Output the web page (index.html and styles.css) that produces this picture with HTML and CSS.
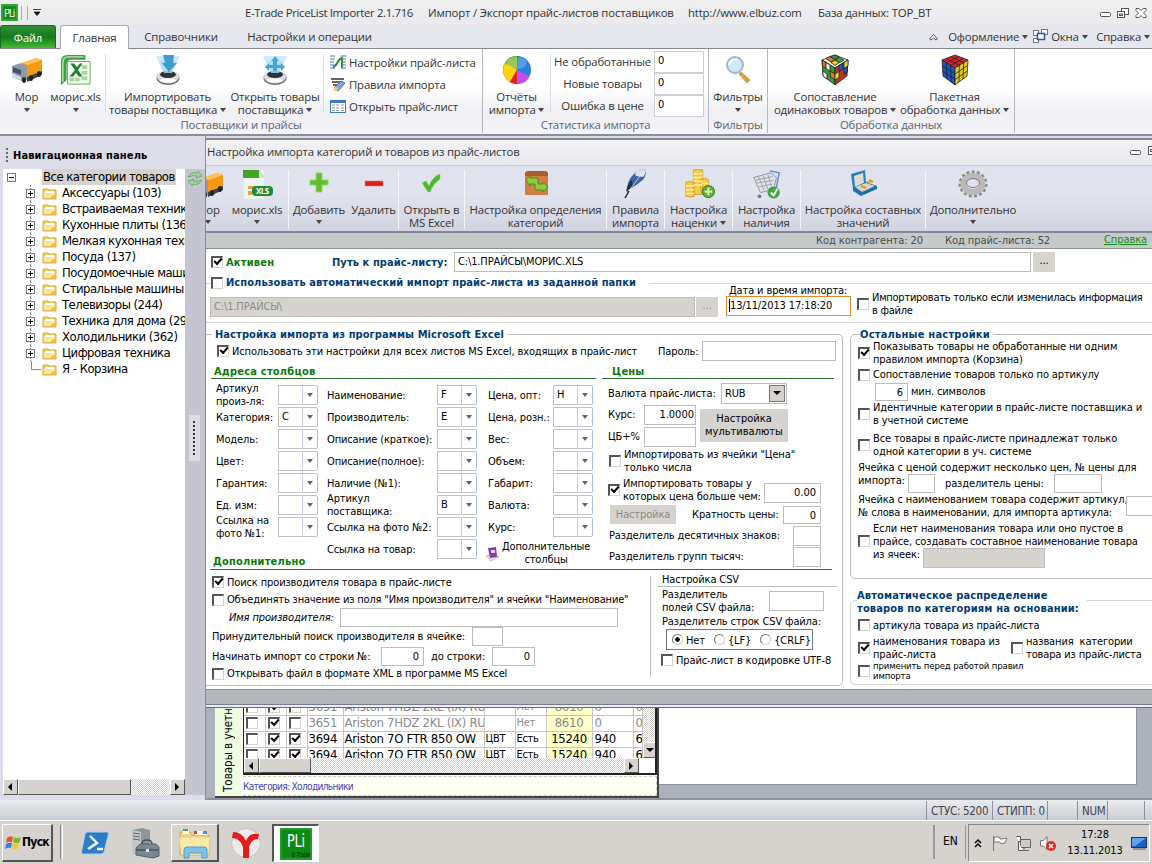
FILE: index.html
```html
<!DOCTYPE html>
<html lang="ru">

<head>
    <meta charset="UTF-8">
    <title>E-Trade PriceList Importer</title>
    <link rel="stylesheet" href="styles.css">
</head>

<body>
    <!-- shared icons -->
    <svg class="defs" width="0" height="0">
        <symbol id="truck" viewBox="0 0 32 32">
            <path d="M11 9l14-5 6 2v13l-15 6z" fill="#f39a10" />
            <path d="M11 9l14-5 6 2-14 5z" fill="#ffc255" />
            <path d="M1 12l9-3 6 3v14l-5 1-10-4z" fill="#8f99a8" />
            <path d="M2 13l8 3v5l-8-3z" fill="#46556b" />
            <path d="M1 19l9 4v3L1 23z" fill="#d5dae2" />
            <path d="M16 23l15-6v4l-15 7z" fill="#444" />
            <ellipse cx="13" cy="26" rx="2" ry="3" fill="#222" />
            <ellipse cx="20" cy="24" rx="2" ry="3" fill="#222" />
            <ellipse cx="28" cy="20" rx="2" ry="3" fill="#222" />
        </symbol>
        <symbol id="folder" viewBox="0 0 15 13">
            <path d="M1 2h5l1 1h7v9H1z" fill="#f4d061" stroke="#d9a93c" />
            <path d="M2 5h11v6H2z" fill="#fbe79a" />
            <path d="M4 4h8v2H4z" fill="#fff" />
            <path d="M8 11l5-4v4z" fill="#f2bd3f" />
        </symbol>
        <symbol id="device" viewBox="0 0 32 32">
            <path d="M4 2h24l-6 14H10z" fill="#b5e2f5" opacity=".7" />
            <ellipse cx="16" cy="24" rx="11.500" ry="7" fill="#6b6e72" />
            <ellipse cx="16" cy="23" rx="11" ry="6.500" fill="#d9dcdf" />
            <ellipse cx="16" cy="20.500" rx="8" ry="3.500" fill="#2c3338" />
            <ellipse cx="16" cy="26.500" rx="8" ry="2" fill="#fff" />
            <path d="M8 7h16l-4 12h-8z" fill="#a5dcf4" opacity=".8" />
        </symbol>
    </svg>

    <div class="titlebar">
        <svg class="app-icon" width="17" height="17" viewBox="0 0 17 17">
            <rect width="17" height="17" rx="1" fill="#148c1b" />
            <rect x="1" y="1" width="15" height="15" fill="none" stroke="#56b94f" />
            <text x="3" y="13" font-size="10" textLength="11" fill="#fff">PLi</text>
        </svg>
        <div class="quick-bars"></div>
        <svg width="8" height="7" viewBox="0 0 8 7"><path d="M0 .5h8M1 3h6L4 6.500z" fill="#111" stroke="#111" stroke-width=".8" /></svg>
        <div class="title-text">
            <span class="t1">E-Trade PriceList Importer 2.1.716</span>
            <span class="t2">Импорт / Экспорт прайс-листов поставщиков</span>
            <span class="t3">http://www.elbuz.com</span>
            <span>База данных: TOP_BT</span>
        </div>
        <svg class="win-buttons" width="50" height="12" viewBox="0 0 50 12" fill="#fff" stroke="#555">
            <rect x="1.500" y="5.500" width="10" height="4" rx="1" />
            <rect x="22.500" y="1.500" width="7" height="6" /><rect x="18.500" y="4.500" width="7" height="6" /><rect x="20.500" y="7" width="3" height="1.500" />
            <path d="M37 1.500h3l2 2 2-2h3v2L44.500 6l2.500 2.500v2h-3l-2-2-2 2h-3v-2L39.500 6 37 3.500z" />
        </svg>
    </div>

    <div class="tabs">
        <div class="tab-file">Файл</div>
        <div class="tab-active">Главная</div>
        <div class="tab tab-refs">Справочники</div>
        <div class="tab tab-ops">Настройки и операции</div>
        <div class="tabs-right">
            <svg width="11" height="8" viewBox="0 0 11 8"><path d="M1.500 6L5.500 1.500 9.500 6 8 7 5.500 5 3 7z" fill="#fff" stroke="#555" /></svg>
            <span class="menu-look">Оформление <i class="arr"></i></span>
            <svg width="16" height="15" viewBox="0 0 16 15" fill="#fff" stroke="#777"><rect x="1.500" y="1.500" width="5" height="5" /><rect x="9.500" y=".5" width="6" height="5" /><rect x="1.500" y="9.500" width="5" height="4" /><rect x="5.500" y="4.500" width="7" height="6" stroke="#2b579a" stroke-width="1.500" /></svg>
            <span class="menu-win">Окна <i class="arr"></i></span>
            <span>Справка <i class="arr"></i></span>
        </div>
    </div>

    <div class="ribbon">
        <div class="group group-price">
            <div class="group-body">
                <div class="big b-truck"><svg width="32" height="32"><use href="#truck" /></svg><p>Мор</p><i class="arr"></i></div>
                <div class="big b-xls">
                    <svg width="34" height="34" viewBox="0 0 34 34">
                        <path d="M1 33V8q0-7 7-7h19v5H12q-5 0-5 5v17z" fill="#3e9c45" />
                        <path d="M3 30V9q0-6 6-6h16" fill="none" stroke="#9fd694" stroke-width="2" />
                        <path d="M8 8h24v24H8z" fill="#f3faf0" stroke="#5cb04e" />
                        <path d="M23 12h6v4h-6zM23 18h6v4h-6zM23 24h6v4h-6zM16 25h5v4h-5zM10 25h5v4h-5z" fill="#a9d998" />
                        <path d="M11 10h4l3 4 3-4h3l-5 7 5 7h-4l-3-4-3 4h-4l6-7z" fill="#1d7f35" />
                    </svg>
                    <p>морис.xls</p><i class="arr"></i>
                </div>
                <div class="sep"></div>
                <div class="big b-import">
                    <svg width="32" height="32"><use href="#device" /><path d="M11 1h11l-1 8h4l-8 9-7-9h3z" fill="#3f9ccc" /></svg>
                    <p>Импортировать<br>товары поставщика <i class="arr"></i></p>
                </div>
                <div class="big b-open">
                    <svg width="32" height="32"><use href="#device" /><path d="M16 2l4 5h-2v4h4V9l4 4-4 4v-3h-4v3h-4v-3h-4v3l-4-4 4-4v2h4V7h-2z" fill="#4aa5d4" /></svg>
                    <p>Открыть товары<br>поставщика <i class="arr"></i></p>
                </div>
                <div class="sep"></div>
                <div class="small-list">
                    <div><svg width="16" height="15" viewBox="0 0 16 15"><path d="M0 1h5M0 4h5M0 7h4M0 10h5M0 13h5M11 1h5M11 4h5M12 7h4M11 10h5M11 13h5" stroke="#7aa7d4" stroke-width="1.500" /><path d="M3 12c5-1 4-8 9-9v10" fill="none" stroke="#388e3c" stroke-width="2" /></svg>Настройки прайс-листа</div>
                    <div><svg width="16" height="15" viewBox="0 0 16 15"><path d="M1 2h13M2 5h10M3 8h5" stroke="#333" stroke-width="1.500" /><path d="M4 11l7-7 4 2-7 8z" fill="#7fa9e0" stroke="#426aa6" /><path d="M3 14l2-5 4 4z" fill="#ffc93d" /></svg>Правила импорта</div>
                    <div><svg width="16" height="13" viewBox="0 0 16 13"><rect x=".5" y=".5" width="15" height="12" fill="#fff" stroke="#4577b5" /><path d="M1 2h14" stroke="#4577b5" stroke-width="2" /><path d="M2 5h3M6 5h3M11 5h3M2 8h3M6 8h3M11 8h3M2 10.500h3M6 10.500h3M11 10.500h3" stroke="#7f98b8" /></svg>Открыть прайс-лист</div>
                </div>
            </div>
            <div class="group-title">Поставщики и прайсы</div>
        </div>
        <div class="group group-stat">
            <div class="group-body">
                <div class="big b-report">
                    <svg width="32" height="32" viewBox="0 0 32 32">
                        <circle cx="16" cy="16" r="14" fill="#2a7fe0" />
                        <path d="M16 16V2A14 14 0 0 0 4 9z" fill="#7ab829" />
                        <path d="M16 16L4 9A14 14 0 0 0 9 28z" fill="#ffd400" />
                        <path d="M16 16L9 28a14 14 0 0 0 7 2z" fill="#e2231a" />
                        <path d="M16 16v14a14 14 0 0 0 12.500-7.500z" fill="#c44df0" />
                        <path d="M16 2l2 0-2 14z" fill="#128a4a" />
                        <ellipse cx="16" cy="9" rx="10" ry="6" fill="#fff" opacity=".22" />
                    </svg>
                    <p>Отчёты<br>импорта <i class="arr"></i></p>
                </div>
                <div class="sep"></div>
                <div class="stat-labels"><p>Не обработанные</p><p>Новые товары</p><p>Ошибка в цене</p></div>
                <div class="stat-values"><p>0</p><p>0</p><p>0</p></div>
            </div>
            <div class="group-title">Статистика импорта</div>
        </div>
        <div class="group group-filter">
            <div class="group-body">
                <div class="big b-filter">
                    <svg width="32" height="32" viewBox="0 0 32 32">
                        <path d="M19 18l9 8-3 3-8-9z" fill="#e79a3c" stroke="#b9772a" stroke-width=".6" />
                        <circle cx="13" cy="11" r="8" fill="#cfe9fb" stroke="#9fb6cf" stroke-width="2" />
                        <path d="M7 11a6 6 0 0 1 8-5" stroke="#fff" stroke-width="2" fill="none" />
                    </svg>
                    <p>Фильтры</p><i class="arr"></i>
                </div>
            </div>
            <div class="group-title">Фильтры</div>
        </div>
        <div class="group group-data">
            <div class="group-body">
                <div class="big b-match">
                    <svg width="30" height="32" viewBox="0 0 30 32" stroke="#222" stroke-width=".8">
                        <path d="M15 1l13 5-13 8L2 6z" fill="#f2f2f2" />
                        <path d="M2 6l13 8v17L3 22z" fill="#2f9a3b" /><path d="M28 6l-13 8v17l12-9z" fill="#c2311f" />
                        <path d="M6 4.500l4-2 5 3-4 2.500z" fill="#e8752a" /><path d="M15 6l4-2.500 5 2.500-4 2.500z" fill="#38a84a" /><path d="M11 8.500l4-2.500 4 2.500-4 3z" fill="#e5d022" /><path d="M10 2.500l5-1.500 4 2-4 2.500z" fill="#3a9a44" />
                        <path d="M2 6l4 2.500v6L2.500 12zM10 17l5 3v6l-4.500-3z" fill="#e8752a" /><path d="M6 8.500l4 2.500v6l-4-2.500zM3 17l4 3v5l-4-3z" fill="#f5f5f5" />
                        <path d="M19 11.500l4-2.500v6l-4 2.500zM24 14.500l3.500-2v5l-3.500 3z" fill="#2356c7" /><path d="M15 20l4-2.500v6L15 26zM24 8.500L28 6v6l-4 2.500z" fill="#e9d23a" />
                    </svg>
                    <p>Сопоставление<br>одинаковых товаров <i class="arr"></i></p>
                </div>
                <div class="big b-batch">
                    <svg width="30" height="32" viewBox="0 0 30 32" stroke="#222" stroke-width=".8">
                        <path d="M15 1l13 5-13 8L2 6z" fill="#d5252b" /><path d="M2 6l13 8v17L3 22z" fill="#1556c9" /><path d="M28 6l-13 8v17l12-9z" fill="#e8cb14" />
                        <path d="M6.300 8.700L19 2.600M10.700 11.300L23.500 4.300M10.700 2.600L23.700 8.700M6.300 4.300l13 7M6.300 8.700L7 25M10.700 11.300L11 28M23.700 8.700L23 25M19.300 11.300L19 28M2.300 11.500L15 20l12.700-8.500M2.600 17L15 25.500 27.400 17" fill="none" />
                    </svg>
                    <p>Пакетная<br>обработка данных <i class="arr"></i></p>
                </div>
            </div>
            <div class="group-title">Обработка данных</div>
        </div>
    </div>

    <div class="workspace">
        <div class="nav">
            <div class="nav-head">Навигационная панель</div>
            <div class="nav-body">
                <div class="tree-wrap">
                    <div class="tree">
                        <div class="root"><b class="pm minus"></b><span>Все категории товаров</span></div>
                        <div class="node"><b class="pm"></b><svg><use href="#folder" /></svg>Аксессуары (103)</div>
                        <div class="node"><b class="pm"></b><svg><use href="#folder" /></svg>Встраиваемая техника</div>
                        <div class="node"><b class="pm"></b><svg><use href="#folder" /></svg>Кухонные плиты (136)</div>
                        <div class="node"><b class="pm"></b><svg><use href="#folder" /></svg>Мелкая кухонная техника</div>
                        <div class="node"><b class="pm"></b><svg><use href="#folder" /></svg>Посуда (137)</div>
                        <div class="node"><b class="pm"></b><svg><use href="#folder" /></svg>Посудомоечные машины</div>
                        <div class="node"><b class="pm"></b><svg><use href="#folder" /></svg>Стиральные машины (1</div>
                        <div class="node"><b class="pm"></b><svg><use href="#folder" /></svg>Телевизоры (244)</div>
                        <div class="node"><b class="pm"></b><svg><use href="#folder" /></svg>Техника для дома (29)</div>
                        <div class="node"><b class="pm"></b><svg><use href="#folder" /></svg>Холодильники (362)</div>
                        <div class="node"><b class="pm"></b><svg><use href="#folder" /></svg>Цифровая техника</div>
                        <div class="node leaf"><svg><use href="#folder" /></svg>Я - Корзина</div>
                    </div>
                    <div class="scroll-h"><b class="sb left"></b><b class="thumb"></b><b class="sb right"></b></div>
                </div>
                <div class="nav-strip">
                    <svg width="16" height="17" viewBox="0 0 16 17"><path d="M1 7q4-6 9-4l1-2 4 5-6 2 1-2Q6 5 1 7zM15 10q-4 6-9 4l-1 2-4-5 6-2-1 2q4 1 9-1z" fill="#9bd89a" stroke="#56a65a" stroke-width=".8" /></svg>
                    <div class="split-grip"></div>
                </div>
            </div>
        </div>

        <div class="mdi">
            <div class="dlg-title"><span>Настройка импорта категорий и товаров из прайс-листов</span>
                <svg width="23" height="12" viewBox="0 0 23 12" fill="#fff" stroke="#555"><rect x="1.500" y="5.500" width="10" height="4" rx="1" /><rect x="19.500" y="1.500" width="9" height="8" /><rect x="21.500" y="4.500" width="5" height="2" /></svg>
            </div>
            <div class="toolbar">
                <div class="tool k-mor"><svg width="32" height="32"><use href="#truck" /></svg><p>Мор</p><i class="arr"></i></div>
                <div class="tool k-xls">
                    <svg width="32" height="32" viewBox="0 0 32 32"><path d="M3 2h20v28H3z" fill="#eef5ee" /><path d="M2 1h16l6 8H2z" fill="#45a32c" /><path d="M18 1v8h7z" fill="#cfe9c5" /><path d="M7 17h8v3H7zM7 22h4v4H7z" fill="#f0a040" /><rect x="11" y="17" width="21" height="10" rx="4" fill="#238a38" /><text x="15" y="25" font-size="8" font-weight="700" textLength="13" fill="#fff">XLS</text></svg>
                    <p>морис.xls</p><i class="arr"></i>
                </div>
                <div class="sep"></div>
                <div class="tool k-add"><svg width="32" height="32" viewBox="0 0 32 32"><path d="M13 4h6v7h6v5h-6v7h-6v-7H7v-5h6z" fill="#63bd2f" stroke="#8ed763" /></svg><p>Добавить</p><i class="arr"></i></div>
                <div class="tool k-del"><svg width="32" height="32" viewBox="0 0 32 32"><rect x="7" y="12" width="18" height="5" fill="#dc1f1a" stroke="#ee7a70" stroke-width=".5" /></svg><p>Удалить</p></div>
                <div class="sep"></div>
                <div class="tool k-excel"><svg width="32" height="32" viewBox="0 0 32 32"><path d="M6 14l4-2 3 5q4-10 11-12v5q-7 5-10 13h-2z" fill="#4db82a" stroke="#7fd45b" stroke-width=".5" /></svg><p>Открыть в<br>MS Excel</p></div>
                <div class="sep"></div>
                <div class="tool k-cat"><svg width="32" height="32" viewBox="0 0 32 32"><path d="M5 4l2-2h19l2 2v22H5z" fill="#cf7f45" /><path d="M5 4l2-2h19l2 2v3H5z" fill="#a95f2d" /><path d="M6 11l4-4v2h8v6h5v-2l5 5-5 5v-2h-8v-6h-5v2z" fill="#8ccd3f" stroke="#4f8b1d" /></svg><p>Настройка определения<br>категорий</p></div>
                <div class="sep"></div>
                <div class="tool k-rules"><svg width="32" height="32" viewBox="0 0 32 32"><path d="M7 25Q6 11 15 4q6-4 11-4 1 9-6 13Q15 18 9 19z" fill="#3a66a8" /><path d="M15 4q6-4 11-4 0 5-3 8l-7-1z" fill="#d7e3ef" /><path d="M6 23q1-8 6-12l1 7-6 4z" fill="#29303d" /><path d="M5 27L23 3" stroke="#dfe9f7" stroke-width=".8" /><path d="M5 29l4-7" stroke="#222" stroke-width="1.500" /></svg><p>Правила<br>импорта</p></div>
                <div class="sep"></div>
                <div class="tool k-markup"><svg width="34" height="34" viewBox="0 0 34 34"><g fill="#f8c944" stroke="#c98d1c" stroke-width=".7"><path d="M11 1q5-2 10 0v26H11zM19 11q4-2 8 0v14h-8zM3 14q5-2 9 0v15q-5 2-9 0z" /><path d="M11 5h10M11 9h10M11 13h10M11 17h10M19 15h8M3 18h9M3 22h9M3 26h9" stroke="#fff0b0" stroke-width="1.500" /></g><circle cx="27" cy="24" r="6.500" fill="#5cb326" stroke="#2d7d14" /><path d="M27 20v8M23 24h8" stroke="#fff" stroke-width="2" /></svg><p>Настройка<br>наценки <i class="arr"></i></p></div>
                <div class="sep"></div>
                <div class="tool k-stock"><svg width="34" height="34" viewBox="0 0 34 34"><path d="M3 9l18-5 6 5-3 13-14 3z" fill="#dfe3e8" stroke="#8d949d" /><path d="M5 12l18-4M6 15l18-3M8 19l15-3M8 8l6 15M13 7l5 15M18 6l4 14" stroke="#9aa1aa" /><path d="M20 2l10 2-4 20" fill="none" stroke="#5a8fcb" stroke-width="1.500" /><circle cx="9" cy="29" r="2" fill="#777" /><circle cx="24" cy="25" r="6.500" fill="#3fa648" /><path d="M21 25l3 3 4-7" fill="none" stroke="#fff" stroke-width="2" /></svg><p>Настройка<br>наличия</p></div>
                <div class="sep"></div>
                <div class="tool k-comp"><svg width="32" height="32" viewBox="0 0 32 32"><path d="M4 5l14-4 1 13-13 6z" fill="#2a7fc0" /><path d="M7 7l9-3 1 10-9 4z" fill="#dcdcd0" /><path d="M6 19l13-6 11 4v3l-16 7-8-5z" fill="#1c6fae" /><path d="M8 18l11-4 9 3-13 6z" fill="#d9d5bd" /><path d="M20 13l3 1M22 11l4 2M14 17l5 2" stroke="#e5912b" stroke-width="2" /></svg><p>Настройка составных<br>значений</p></div>
                <div class="sep"></div>
                <div class="tool k-more"><svg width="32" height="32" viewBox="0 0 32 32"><ellipse cx="16" cy="15" rx="13" ry="12" fill="none" stroke="#8e8a8a" stroke-width="3" stroke-dasharray="3 2.200" /><ellipse cx="16" cy="15" rx="9.500" ry="8" fill="none" stroke="#bcb8b8" stroke-width="6" /><ellipse cx="16" cy="14" rx="6.500" ry="4.500" fill="none" stroke="#807b7b" /></svg><p>Дополнительно</p><i class="arr"></i></div>
            </div>
            <div class="info-bar"><span class="code1">Код контрагента: 20</span><span class="code2">Код прайс-листа: 52</span><a>Справка</a></div>

            <div class="form">
                <div class="row path-row">
                    <i class="cb on"></i><span class="green active-lbl">Активен</span>
                    <span class="blue path-lbl">Путь к прайс-листу:</span>
                    <span class="inp path-inp">C:\1.ПРАЙСЫ\МОРИС.XLS</span><span class="btn dots">...</span>
                </div>

                <div class="auto-import">
                    <div class="auto-left">
                        <div class="row auto-head"><i class="cb"></i><span class="blue">Использовать автоматический импорт прайс-листа из заданной папки</span></div>
                        <div class="row"><span class="inp off folder-inp">C:\1.ПРАЙСЫ\</span><span class="btn dots off">...</span></div>
                    </div>
                    <div class="auto-date"><p>Дата и время импорта:</p><span class="inp date-inp">13/11/2013 17:18:20</span></div>
                    <div class="row changed"><i class="cb"></i><span>Импортировать только если изменилась информация<br>в файле</span></div>
                </div>

                <div class="columns">
                    <div class="box excel-box">
                        <span class="blue legend">Настройка импорта из программы Microsoft Excel</span>
                        <div class="row all-sheets"><i class="cb on"></i><span class="all-lbl">Использовать эти настройки для всех листов MS Excel, входящих в прайс-лист</span><span class="pass-lbl">Пароль:</span><span class="inp pass-inp"></span></div>
                        <div class="upper">
                            <div class="addr">
                                <h4>Адреса столбцов</h4>
                                <div class="addr-cols">
                                    <div class="col-a">
                                        <div class="fld"><label>Артикул<br>произ-ля:</label><span class="combo"></span></div>
                                        <div class="fld"><label>Категория:</label><span class="combo">C</span></div>
                                        <div class="fld"><label>Модель:</label><span class="combo"></span></div>
                                        <div class="fld"><label>Цвет:</label><span class="combo"></span></div>
                                        <div class="fld"><label>Гарантия:</label><span class="combo"></span></div>
                                        <div class="fld"><label>Ед. изм:</label><span class="combo"></span></div>
                                        <div class="fld"><label>Ссылка на<br>фото №1:</label><span class="combo"></span></div>
                                        <h4 class="more-head">Дополнительно</h4>
                                    </div>
                                    <div class="col-b">
                                        <div class="fld"><label>Наименование:</label><span class="combo">F</span></div>
                                        <div class="fld"><label>Производитель:</label><span class="combo">E</span></div>
                                        <div class="fld"><label>Описание (краткое):</label><span class="combo"></span></div>
                                        <div class="fld"><label>Описание(полное):</label><span class="combo"></span></div>
                                        <div class="fld"><label>Наличие (№1):</label><span class="combo"></span></div>
                                        <div class="fld"><label>Артикул<br>поставщика:</label><span class="combo">B</span></div>
                                        <div class="fld"><label>Ссылка на фото №2:</label><span class="combo"></span></div>
                                        <div class="fld"><label>Ссылка на товар:</label><span class="combo"></span></div>
                                    </div>
                                    <div class="col-c">
                                        <div class="fld"><label>Цена, опт:</label><span class="combo">H</span></div>
                                        <div class="fld"><label>Цена, розн.:</label><span class="combo"></span></div>
                                        <div class="fld"><label>Вес:</label><span class="combo"></span></div>
                                        <div class="fld"><label>Объем:</label><span class="combo"></span></div>
                                        <div class="fld"><label>Габарит:</label><span class="combo"></span></div>
                                        <div class="fld"><label>Валюта:</label><span class="combo"></span></div>
                                        <div class="fld"><label>Курс:</label><span class="combo"></span></div>
                                        <div class="extra-cols"><svg width="15" height="15" viewBox="0 0 15 15"><path d="M1 10l9-2 4 3-8 4z" fill="#ddd" stroke="#999" stroke-width=".5" /><path d="M3 2l8-1 1 10-7 1z" fill="#8a3aa8" /><path d="M6 4h4v3H6z" fill="#e7d3f0" /></svg><span>Дополнительные<br>столбцы</span></div>
                                    </div>
                                </div>
                            </div>
                            <div class="prices">
                                <h4>Цены</h4>
                                <div class="row cur-row"><span>Валюта прайс-листа:</span><span class="inp select">RUB<b></b></span></div>
                                <div class="rate">
                                    <div>
                                        <div class="row rate-row"><span>Курс:</span><span class="inp num">1.0000</span></div>
                                        <div class="row rate-row"><span>ЦБ+%</span><span class="inp num"></span></div>
                                    </div>
                                    <span class="btn multi">Настройка<br>мультивалюты</span>
                                </div>
                                <div class="row only-num"><i class="cb"></i><span>Импортировать из ячейки "Цена"<br>только числа</span></div>
                                <div class="row more-than"><i class="cb on"></i><span class="more-lbl">Импортировать товары у<br>которых цена больше чем:</span><span class="inp num">0.00</span></div>
                                <div class="row mult-row"><span class="btn off setup">Настройка</span><span class="mult-lbl">Кратность цены:</span><span class="inp num">0</span></div>
                                <div class="row sep-row"><span>Разделитель десятичных знаков:</span><span class="inp"></span></div>
                                <div class="row sep-row"><span>Разделитель групп тысяч:</span><span class="inp"></span></div>
                            </div>
                        </div>
                        <div class="lower">
                            <div class="more">
                                <div class="row m1"><i class="cb on"></i><span>Поиск производителя товара в прайс-листе</span></div>
                                <div class="row m2"><i class="cb"></i><span>Объединять значение из поля "Имя производителя" и ячейки "Наименование"</span></div>
                                <div class="row m3"><em>Имя производителя:</em><span class="inp"></span></div>
                                <div class="row m4"><span class="lbl">Принудительный поиск производителя в ячейке:</span><span class="inp"></span></div>
                                <div class="row m5"><span class="lbl">Начинать импорт со строки №:</span><span class="inp num">0</span><span class="to">до строки:</span><span class="inp num">0</span></div>
                                <div class="row m6"><i class="cb"></i><span>Открывать файл в формате XML в программе MS Excel</span></div>
                            </div>
                            <div class="csv">
                                <p class="csv-head">Настройка CSV</p>
                                <div class="row csv-field"><span>Разделитель<br>полей CSV файла:</span><span class="inp"></span></div>
                                <p class="csv-lines">Разделитель строк CSV файла:</p>
                                <div class="radios"><i class="rb on"></i><span>Нет</span><i class="rb"></i><span>{LF}</span><i class="rb"></i><span>{CRLF}</span></div>
                                <div class="row utf"><i class="cb"></i><span>Прайс-лист в кодировке UTF-8</span></div>
                            </div>
                        </div>
                    </div>

                    <div class="side">
                        <div class="box other-box">
                            <span class="blue legend">Остальные настройки</span>
                            <div class="row o1"><i class="cb on"></i><span>Показывать товары не обработанные ни одним<br>правилом импорта (Корзина)</span></div>
                            <div class="row o2"><i class="cb"></i><span>Сопоставление товаров только по артикулу</span></div>
                            <div class="row o3"><span class="inp num">6</span><span>мин. символов</span></div>
                            <div class="row o4"><i class="cb"></i><span>Идентичные категории в прайс-листе поставщика и<br>в учетной системе</span></div>
                            <div class="row o5"><i class="cb"></i><span>Все товары в прайс-листе принадлежат только<br>одной категории в уч. системе</span></div>
                            <p class="o6">Ячейка с ценой содержит несколько цен, № цены для</p>
                            <div class="row o7"><span class="imp">импорта:</span><span class="inp"></span><span class="dlm">разделитель цены:</span><span class="inp wide"></span></div>
                            <div class="row o8"><span>Ячейка с наименованием товара содержит артикул,<br>№ слова в наименовании, для импорта артикула:</span><span class="inp"></span></div>
                            <div class="row o9"><i class="cb"></i><div>Если нет наименования товара или оно пустое в<br>прайсе, создавать составное наименование товара<div class="cells">из ячеек:<span class="inp off"></span></div></div></div>
                        </div>
                        <div class="box auto-box">
                            <span class="blue legend">Автоматическое распределение<br>товаров по категориям на основании:</span>
                            <div class="row a1"><i class="cb"></i><span>артикула товара из прайс-листа</span></div>
                            <div class="row a2"><i class="cb on"></i><span class="by-name">наименования товара из<br>прайс-листа</span><i class="cb"></i><span>названия&nbsp; категории<br>товара из прайс-листа</span></div>
                            <div class="row a3"><i class="cb"></i><span>применить перед работой правил<br>импорта</span></div>
                        </div>
                    </div>
                </div>
            </div>
            <div class="dlg-foot"></div>

            <div class="under">
                <div class="goods">
                    <div class="side-label"><span>Товары в учетной</span></div>
                    <div class="goods-main">
                        <div class="grid-wrap">
                            <div class="grid-view">
                                <table>
                                    <tr class="dim"><td><i class="cb"></i></td><td><i class="cb on"></i></td><td><i class="cb"></i></td><td>3651</td><td>Ariston 7HDZ 2KL (IX) RU</td><td class="s"></td><td class="s">Нет</td><td class="y">8610</td><td>0</td><td>0</td></tr>
                                    <tr class="dim"><td><i class="cb"></i></td><td><i class="cb on"></i></td><td><i class="cb"></i></td><td>3651</td><td>Ariston 7HDZ 2KL (IX) RU</td><td class="s"></td><td class="s">Нет</td><td class="y">8610</td><td>0</td><td>0</td></tr>
                                    <tr><td><i class="cb"></i></td><td><i class="cb on"></i></td><td><i class="cb on"></i></td><td>3694</td><td>Ariston 7O FTR 850 OW</td><td class="s">ЦВТ</td><td class="s">Есть</td><td class="y">15240</td><td>940</td><td>6</td></tr>
                                    <tr><td><i class="cb"></i></td><td><i class="cb on"></i></td><td><i class="cb on"></i></td><td>3694</td><td>Ariston 7O FTR 850 OW</td><td class="s">ЦВТ</td><td class="s">Есть</td><td class="y">15240</td><td>940</td><td>6</td></tr>
                                </table>
                                <div class="scroll-v"><b class="sb down"></b></div>
                            </div>
                            <div class="scroll-h"><b class="sb left"></b><b class="thumb"></b><b class="sb right"></b></div>
                        </div>
                        <div class="category">Категория: Холодильники</div>
                    </div>
                </div>
                <div class="blank"></div>
            </div>
        </div>
    </div>

    <div class="statusbar">
        <span class="s1">СТУС: 5200</span><span class="s2">СТИПП: 0</span><span class="s3"></span><span class="s4">NUM</span><span class="s5"></span><span class="s6"></span>
    </div>

    <div class="taskbar">
        <div class="start">
            <svg width="17" height="16" viewBox="0 0 17 16"><path d="M2 3q3-3 6-1L7 7Q4 6 1 8z" fill="#e8542a" /><path d="M9 2q3 2 7 0l-2 6q-3 1-6-1z" fill="#7dbb2e" /><path d="M1 9q3-2 6-1l-1 5q-3-1-6 1z" fill="#2f84d6" /><path d="M8 8q3 2 6 1l-2 5q-3 2-5-1z" fill="#fcc31e" /></svg>Пуск
        </div>
        <div class="task-sep"></div>
        <div class="task"><svg width="28" height="24" viewBox="0 0 28 24"><path d="M6 1h20q2 0 1.500 2L23 21q-.5 2-3 2H2q-2 0-1.500-2L4 3q.5-2 2-2z" fill="#2d7fc4" stroke="#a9d0ee" /><path d="M9 5l7 7-9 6M16 18h6" fill="none" stroke="#fff" stroke-width="2.400" /></svg></div>
        <div class="task"><svg width="30" height="32" viewBox="0 0 30 32"><path d="M2 3l10-2 8 2v24l-8 2-10-3z" fill="#8d969d" /><path d="M2 3l9 2v24l-9-3z" fill="#c0c7cb" /><path d="M3 6l7 1M3 9l7 1M3 12l7 1" stroke="#59646b" /><path d="M6 21l4-4h16l3 3v9l-6 2-17-3z" fill="#798791" stroke="#54616a" /><path d="M12 17q0-4 5-4t5 4M6 23h22" fill="none" stroke="#46525b" stroke-width="1.500" /><path d="M16 22h3v3h-3z" fill="#dde3e6" /></svg></div>
        <div class="task raised"><svg width="34" height="32" viewBox="0 0 34 32"><path d="M2 5h10l2 3h17v20H2z" fill="#f0d781" stroke="#c9a850" /><path d="M5 3h6v4H5zM17 4h12v4H17z" fill="#fff" /><path d="M5 2h5v2H5z" fill="#4ca64c" /><path d="M16 4h3v3h-3z" fill="#d64b2a" /><path d="M25 4h4v3h-4z" fill="#5490d0" /><path d="M1 10h31l-1 18H3z" fill="#fae9a6" stroke="#dcbf66" stroke-width=".6" /><path d="M6 31v-8q0-3 3-3h17q3 0 3 3v8h-5v-5H11v5z" fill="#7cc3e8" stroke="#4e9bcb" /></svg></div>
        <div class="task"><svg width="32" height="32" viewBox="0 0 32 32"><circle cx="16" cy="16" r="14.500" fill="#eceaea" stroke="#c2c0c0" /><path d="M3 5q9 0 13 9 3-9 13-7l-1 5q-7 0-9 8v11h-6V20Q10 11 2 11z" fill="#e51a1a" /></svg></div>
        <div class="task pressed"><svg width="32" height="32" viewBox="0 0 32 32"><rect width="32" height="32" fill="#0d8a14" /><rect x="1" y="1" width="30" height="30" fill="none" stroke="#3aa73b" /><text x="7" y="19" font-size="18" textLength="18" lengthAdjust="spacingAndGlyphs" fill="#fff">PLi</text><text x="12" y="29" font-size="7" textLength="18" lengthAdjust="spacingAndGlyphs" fill="#021">E-Trade</text></svg></div>
        <div class="tray-left"><span>EN</span></div>
        <div class="tray">
            <svg width="8" height="11" viewBox="0 0 8 11"><path d="M1 5l3-3 3 3M1 9l3-3 3 3" fill="none" stroke="#000" stroke-width="1.500" /></svg>
            <svg class="flag" width="18" height="17" viewBox="0 0 18 17"><path d="M2.500 1v15M3 2.500q3-1.500 6 0v1.500q3 0 7-1l-2 5q-3 1-5 0v-1H3z" fill="#fff" stroke="#777" /></svg>
            <svg class="net" width="17" height="17" viewBox="0 0 17 17"><path d="M5.500 4.500h10v8h-10zM9 13v2M6 15.500h8" fill="#ccc" stroke="#666" /><path d="M1.500 1.500h4v5h-2v9h4" fill="#fff" stroke="#555" /></svg>
            <svg class="snd" width="18" height="17" viewBox="0 0 18 17"><path d="M1.500 5.500h3L8 1.500v13L4.500 11h-3z" fill="#fff" stroke="#777" /><circle cx="12" cy="11" r="5" fill="#e02b20" /><path d="M10 9l4 4M14 9l-4 4" stroke="#fff" stroke-width="1.500" /></svg>
            <div class="clock">17:28<br>13.11.2013</div>
            <svg width="16" height="13" viewBox="0 0 16 13"><rect x=".5" y=".5" width="15" height="10" fill="#1c5fc4" stroke="#24344d" /><path d="M1 1h14L4 9H1z" fill="#5fa5ee" /><path d="M2 12h13" stroke="#555" /></svg>
        </div>
    </div>
</body>

</html>
```
FILE: styles.css
```css
* {
    margin: 0;
    padding: 0;
    box-sizing: border-box;
}

body {
    width: 1152px;
    height: 864px;
    overflow: hidden;
    font-family: "DejaVu Sans Condensed", "DejaVu Sans", sans-serif;
    font-stretch: condensed;
    font-size: 11px;
    letter-spacing: -0.13px;
    line-height: 13px;
    color: #000;
    background: #d6d3ce;
    white-space: nowrap;
}

svg {
    display: block;
    flex: none;
}

.defs {
    position: absolute;
}

.row {
    display: flex;
    align-items: center;
}

.arr {
    display: inline-block;
    border: 3px solid transparent;
    border-top: 4px solid #444;
    border-bottom: 0;
    vertical-align: 2px;
}

.titlebar,
.tabs,
.ribbon,
.dlg-title,
.toolbar {
    font-family: "Open Sans", "Noto Sans", sans-serif;
    font-stretch: normal;
    font-size: 11.400px;
    letter-spacing: -0.18px;
    color: #333;
}

/* title bar and tabs */
.titlebar {
    display: flex;
    align-items: center;
    height: 25px;
    padding: 0 3px 0 1px;
    background: linear-gradient(#f0f0f0, #e9e9ee);
}

.quick-bars {
    width: 7px;
    height: 14px;
    margin: 0 5px 0 3px;
    border-left: 1px solid #aaa;
    border-right: 1px solid #aaa;
}

.title-text {
    display: flex;
    flex: 1;
    padding-left: 204px;
}

.title-text .t1 {
    width: 183px;
    letter-spacing: -0.35px;
}

.title-text .t2 {
    width: 260px;
}

.title-text .t3 {
    width: 130px;
}

.tabs {
    display: flex;
    height: 24px;
    border-bottom: 1px solid #83868f;
    background: #e6e7ee;
    line-height: 23px;
}

.tab-file {
    width: 56px;
    border: 1px solid #1d6c22;
    border-bottom: 0;
    border-radius: 3px 3px 0 0;
    background: linear-gradient(#2f8f34, #157a1b 50%, #45bb34);
    color: #fff;
    text-align: center;
}

.tab-active {
    width: 69px;
    height: 24px;
    margin-left: 4px;
    border: 1px solid #a5a8b3;
    border-bottom: 0;
    border-radius: 3px 3px 0 0;
    background: #fff;
    text-align: center;
}

.tab-refs {
    width: 104px;
    text-align: center;
}

.tab-ops {
    width: 153px;
    text-align: center;
}

.tabs-right {
    display: flex;
    align-items: center;
    margin-left: auto;
    padding-right: 2px;
}

.tabs-right svg:first-child {
    margin-right: 9px;
}

.menu-look {
    width: 84px;
}

.menu-win {
    width: 45px;
    margin-left: 3px;
}

/* ribbon */
.ribbon {
    display: flex;
    height: 87px;
    border-bottom: 2px solid #8b8d97;
    background: linear-gradient(#fff 45%, #efeff4 75%, #f4f4f8);
}

.group {
    border-right: 1px solid #b5b8c2;
    margin-bottom: 1px;
}

.group-price {
    width: 483px;
}

.group-stat {
    width: 226px;
}

.group-filter {
    width: 59px;
}

.group-data {
    width: 247px;
}

.group-body {
    display: flex;
    height: 70px;
}

.group-title {
    text-align: center;
    color: #5d6370;
    line-height: 12px;
}

.sep {
    width: 1px;
    margin: 5px 0 7px;
    background: #d9dae0;
}

.big {
    display: flex;
    flex: none;
    flex-direction: column;
    align-items: center;
    padding-top: 5px;
    text-align: center;
}

.big svg {
    height: 32px;
    margin-bottom: 4px;
}

.big > .arr {
    margin-top: 5px;
}

.b-truck {
    width: 53px;
}

.b-xls {
    width: 45px;
    margin-right: 7px;
}

.b-import {
    width: 123px;
}

.b-open {
    width: 92px;
    margin-right: 2px;
}

.small-list {
    padding: 2px 0 0 6px;
}

.small-list div {
    display: flex;
    align-items: center;
    gap: 3px;
    height: 22px;
}

.b-report {
    width: 67px;
}

.stat-labels {
    width: 103px;
    padding-top: 2px;
    text-align: center;
    line-height: 22px;
}

.stat-values {
    padding-top: 2px;
    font-family: "DejaVu Sans Condensed", sans-serif;
    font-size: 11px;
    color: #000;
}

.stat-values p {
    width: 50px;
    height: 22px;
    padding: 0 3px;
    border: 1px solid #cdced6;
    background: #fff;
    line-height: 18px;
}

.b-filter {
    width: 58px;
}

.b-match {
    width: 122px;
    margin-left: 6px;
}

.b-batch {
    width: 117px;
}

/* navigation */
.workspace {
    display: flex;
    height: 664px;
    background: #dddde9;
}

.nav {
    width: 206px;
    padding: 4px 0 0 3px;
    border-right: 1px solid #8888a0;
}

.nav-head {
    height: 29px;
    margin: 0 0 0 3px;
    padding: 9px 0 0 7px;
    font-weight: bold;
    letter-spacing: 0.13px;
    line-height: 13px;
    background: radial-gradient(circle, #666 1px, transparent 1.2px) 0 7px / 2px 4px no-repeat, radial-gradient(circle, #666 1px, transparent 1.2px) 0 11px / 2px 4px no-repeat, radial-gradient(circle, #666 1px, transparent 1.2px) 0 15px / 2px 4px no-repeat, radial-gradient(circle, #666 1px, transparent 1.2px) 0 19px / 2px 4px no-repeat;
}

.nav-body {
    display: flex;
    height: 626px;
}

.tree-wrap {
    display: flex;
    flex-direction: column;
    width: 182px;
    background: #fff;
}

.tree {
    flex: 1;
    overflow: hidden;
    font-size: 13px;
    letter-spacing: -0.52px;
    line-height: 16px;
}

.root {
    display: flex;
    align-items: center;
    height: 16px;
    padding-left: 4px;
}

.root span {
    margin-left: 26px;
    padding: 0 1px;
    background: #d6d3ce;
}

.node {
    display: flex;
    align-items: center;
    height: 16px;
    margin-left: 27px;
    padding-left: 0;
    border-left: 1px dotted #888;
}

.node svg {
    width: 15px;
    height: 13px;
    margin: 0 5px 0 7px;
}

.leaf svg {
    margin-left: 11px;
}

.leaf {
    border-left-color: transparent;
    background: linear-gradient(#888, #888) 0 0 / 1px 8px no-repeat, linear-gradient(#888, #888) 0 8px / 10px 1px no-repeat;
}

.pm {
    flex: none;
    width: 9px;
    height: 9px;
    margin-left: -5px;
    border: 1px solid #777;
    background: linear-gradient(#000, #000) center / 5px 1px no-repeat, linear-gradient(#000, #000) center / 1px 5px no-repeat, #fff;
}

.pm.minus {
    margin-left: 0;
    background: linear-gradient(#000, #000) center / 5px 1px no-repeat, #fff;
}

.scroll-h {
    display: flex;
    height: 16px;
    background: repeating-conic-gradient(#d6d3ce 0 25%, #fff 0 50%) 0 0 / 2px 2px;
}

.sb,
.thumb {
    display: block;
    width: 15px;
    height: 16px;
    border: 1px solid #fff;
    border-right-color: #555;
    border-bottom-color: #555;
    background: #d6d3ce;
}

.sb::after {
    content: "";
    display: block;
    width: 0;
    height: 0;
    margin: 3px 0 0 4px;
    border: 4px solid transparent;
}

.sb.left::after {
    border-left: 0;
    border-right-color: #000;
}

.sb.right::after {
    border-right: 0;
    border-left-color: #000;
}

.sb.down::after {
    margin: 5px 0 0 2px;
    border-bottom: 0;
    border-top-color: #000;
}

.sb.right {
    margin-left: auto;
}

.tree-wrap .thumb {
    width: 113px;
}

.nav-strip {
    width: 20px;
    padding: 1px 2px;
    background: #c5c5d1;
}

.split-grip {
    width: 11px;
    height: 46px;
    margin: 228px 0 0 2px;
    background: repeating-linear-gradient(#333 0 2px, transparent 2px 4px) 4px 6px / 2px 34px no-repeat, #dcdce6;
}

/* settings window */
.mdi {
    display: flex;
    flex-direction: column;
    width: 946px;
    overflow: hidden;
}

.dlg-title {
    display: flex;
    flex: none;
    justify-content: space-between;
    align-items: center;
    height: 27px;
    margin-top: 2px;
    padding: 0 0 3px 1px;
    border-top: 2px solid #83868f;
    background: linear-gradient(#f2f2f5, #e7e8ef);
}

.toolbar {
    display: flex;
    flex: none;
    height: 68px;
    border-top: 1px solid #c5cadb;
    border-bottom: 2px solid #83889b;
    background: linear-gradient(#dfe1ec, #e1e3ee 40%, #d1d3e0);
}

.toolbar .sep {
    margin: 4px 0 2px;
    background: #f7f7fb;
    flex: none;
}

.tool {
    display: flex;
    flex: none;
    flex-direction: column;
    align-items: center;
    padding-top: 3px;
    text-align: center;
}

.tool svg {
    height: 32px;
    margin-bottom: 2px;
}

.tool > .arr {
    margin-top: 4px;
}

.k-mor { width: 44px; margin-left: -20px; }
.k-xls { width: 54px; margin-right: 4px; }
.k-add { width: 60px; }
.k-del { width: 49px; }
.k-excel { width: 65px; }
.k-cat { width: 141px; }
.k-rules { width: 57px; }
.k-markup { width: 67px; }
.k-stock { width: 67px; }
.k-comp { width: 124px; }
.k-more { width: 94px; }

.info-bar {
    display: flex;
    flex: none;
    height: 16px;
    padding-left: 610px;
    border-bottom: 1px solid #8b9090;
    background: #c5c9ca;
    font-size: 11px;
    letter-spacing: -0.07px;
    line-height: 16px;
    color: #4b4b4b;
}

.code1 {
    width: 129px;
}

.code2 {
    width: 159px;
}

.info-bar a {
    color: #128c12;
    line-height: 13px;
    text-decoration: underline;
}

/* form controls */
.form {
    flex: none;
    height: 440px;
    background: #fff;
}

.blue {
    color: #003c74;
    font-weight: bold;
    letter-spacing: 0.08px;
}

.green,
h4 {
    color: #0b7a0b;
    font-size: 11px;
    font-weight: bold;
}

h4 {
    line-height: 13px;
    border-bottom: 1px solid #2c6e2c;
    letter-spacing: 0.2px;
}

.cb {
    position: relative;
    display: block;
    flex: none;
    width: 12px;
    height: 12px;
    margin-right: 3px;
    border: 1px solid #d6d3ce;
    border-top: 2px solid #555;
    border-left: 2px solid #555;
    background: #fff;
}

.cb.on::after {
    content: "";
    position: absolute;
    left: 1px;
    top: 0;
    width: 6px;
    height: 3px;
    border-left: 2px solid #000;
    border-bottom: 2px solid #000;
    transform: rotate(-48deg);
}

.inp {
    flex: none;
    height: 20px;
    border: 1px solid #bcbcbc;
    background: #fff;
    line-height: 18px;
}

.btn {
    flex: none;
    background: #d6d3ce;
    text-align: center;
}

.off {
    background: #d6d3ce;
    color: #8a8a8a;
}

.num {
    padding-right: 4px;
    text-align: right;
    letter-spacing: 0;
}

.dots {
    width: 22px;
    height: 20px;
    line-height: 18px;
}

.path-row {
    height: 26px;
    padding-left: 5px;
}

.active-lbl {
    width: 106px;
    letter-spacing: 0.2px;
}

.path-lbl {
    width: 122px;
}

.path-inp {
    width: 577px;
    margin-right: 2px;
    padding-left: 3px;
}

.auto-import {
    display: flex;
    height: 48px;
    border-bottom: 1px solid #d5d5d5;
    background: linear-gradient(#d5d5d5, #d5d5d5) 0 8px / 100% 1px no-repeat;
}

.auto-left {
    padding-left: 4px;
}

.auto-head {
    width: 440px;
    height: 15px;
    margin-bottom: 7px;
    padding-left: 1px;
    background: #fff;
}

.folder-inp {
    width: 485px;
    padding-left: 3px;
}

.auto-left .btn {
    margin-left: 1px;
}

.auto-date {
    padding: 9px 0 0 8px;
}

.auto-date p {
    padding-left: 3px;
    margin-right: -4px;
    background: #fff;
}

.date-inp {
    display: block;
    width: 125px;
    height: 20px;
    margin-top: -1px;
    padding-left: 3px;
    border-color: #e08a2c;
    background: linear-gradient(#000, #000) 2px 2px / 1px 13px no-repeat, #fff;
}

.changed {
    height: 27px;
    margin: 15px 0 0 6px;
    letter-spacing: -0.26px;
}

.columns {
    display: flex;
    padding-top: 11px;
}

.box {
    border: 1px solid #bcbcbc;
    border-radius: 5px;
}

.legend {
    display: block;
    width: max-content;
    background: #fff;
}

.excel-box {
    width: 637px;
    height: 352px;
    border-left: 0;
    border-radius: 0 5px 5px 0;
}

.excel-box > .legend {
    margin: -7px 0 0 6px;
    padding: 0 3px;
}

.all-sheets {
    height: 20px;
    padding-left: 11px;
}

.all-lbl {
    width: 426px;
}

.pass-lbl {
    width: 44px;
}

.pass-inp {
    width: 134px;
}

.upper {
    display: flex;
    height: 208px;
    padding-top: 4px;
}

.lower {
    display: flex;
    margin: 0 10px 0 4px;
    border-top: 1px solid #2c6e2c;
    width: 622px;
}

.addr {
    width: 402px;
}

.addr > h4 {
    width: 385px;
    margin-left: 5px;
    padding-left: 3px;
}

.addr-cols {
    display: flex;
    padding-top: 5px;
}

.fld {
    display: flex;
    align-items: center;
    height: 22px;
}

.fld label {
    line-height: 13px;
}

.col-a label {
    width: 62px;
}

.col-b label {
    width: 110px;
}

.col-c label {
    width: 65px;
}

.col-a {
    margin-left: 10px;
    width: 111px;
}

.col-b {
    width: 161px;
}

.more-head {
    margin: 17px 0 0 -3px;
    border: 0;
}

.combo {
    flex: none;
    width: 40px;
    height: 20px;
    padding-left: 3px;
    border: 1px solid #c0c0c4;
    border-right-color: #a9bbe0;
    border-radius: 0 2px 2px 0;
    background: linear-gradient(#c3cbe0, #c3cbe0) 23px 0 / 1px 100% no-repeat;
    line-height: 18px;
    position: relative;
}

.combo::after {
    content: "";
    position: absolute;
    right: 4px;
    top: 7px;
    border: 3.500px solid transparent;
    border-top: 4px solid #55628c;
    border-bottom: 0;
}

.extra-cols {
    display: flex;
    align-items: center;
    height: 30px;
    gap: 2px;
    margin-left: -3px;
    text-align: center;
}

.prices > h4 {
    width: 232px;
    margin-left: -6px;
    padding-left: 10px;
    margin-bottom: 4px;
    background: linear-gradient(#fff, #fff) 0 100% / 4px 1px no-repeat;
}

.cur-row span:first-child {
    width: 113px;
}

.select {
    display: flex;
    width: 66px;
    height: 21px;
    justify-content: space-between;
    align-items: center;
    padding: 0 1px 0 3px;
}

.select b {
    width: 16px;
    height: 17px;
    border: 1px solid #777;
    background: #d6d3ce;
}

.select b::after {
    content: "";
    display: block;
    margin: 5px 0 0 3px;
    width: 0;
    border: 4px solid transparent;
    border-top-color: #000;
    border-bottom: 0;
}

.rate {
    display: flex;
    align-items: center;
    height: 43px;
}

.rate-row {
    height: 22px;
}

.rate-row span:first-child {
    width: 36px;
}

.rate-row .inp {
    width: 52px;
    padding-right: 1px;
}

.multi {
    width: 88px;
    height: 33px;
    margin-left: 4px;
    padding-top: 3px;
    letter-spacing: 0;
}

.only-num {
    height: 28px;
    padding-left: 1px;
}

.more-than {
    height: 29px;
}

.more-lbl {
    width: 141px;
}

.more-than .inp {
    width: 57px;
    margin-top: 7px;
}

.mult-row {
    height: 21px;
    padding: 0 0 0 2px;
}

.setup {
    width: 66px;
    height: 19px;
    margin-right: 16px;
    line-height: 19px;
}

.mult-lbl {
    width: 91px;
}

.mult-row .inp {
    width: 38px;
    height: 18px;
}

.sep-row {
    height: 21px;
    padding-left: 1px;
}

.sep-row span:first-child {
    width: 184px;
}

.sep-row .inp {
    width: 28px;
}

.more {
    width: 440px;
    padding: 4px 0 0 2px;
}

.m1 {
    height: 16px;
}

.m2 {
    height: 19px;
    letter-spacing: -0.17px;
}

.m3 {
    height: 16px;
    padding-left: 17px;
}

.m3 em {
    width: 111px;
}

.m3 .inp {
    width: 278px;
    height: 19px;
}

.m4 {
    height: 23px;
}

.m4 .lbl {
    width: 260px;
}

.m4 .inp {
    width: 31px;
    height: 19px;
}

.m5 {
    height: 17px;
}

.m5 .lbl {
    width: 169px;
}

.m5 .inp {
    width: 43px;
    height: 19px;
}

.m5 .to {
    width: 68px;
    padding-left: 7px;
}

.m6 {
    height: 17px;
}

.csv {
    width: 188px;
    height: 101px;
    margin-top: 6px;
    margin-right: -6px;
    border-left: 1px solid #bcbcbc;
}

.csv-head {
    height: 11px;
    margin-left: 6px;
    padding-left: 5px;
    line-height: 7px;
    width: 180px;
    border-bottom: 1px solid #bcbcbc;
}

.csv-field {
    height: 28px;
    padding-left: 11px;
}

.csv-field span:first-child {
    width: 107px;
}

.csv-field .inp {
    width: 55px;
}

.csv-lines {
    padding-left: 11px;
    height: 14px;
}

.radios {
    display: flex;
    align-items: center;
    width: 147px;
    height: 21px;
    margin-left: 15px;
    padding-left: 5px;
    border: 1px solid #777;
}

.radios span {
    margin: 2px 9px 0 3px;
}

.rb {
    flex: none;
    width: 11px;
    height: 11px;
    border: 1px solid #777;
    border-right-color: #ccc;
    border-bottom-color: #ccc;
    border-radius: 50%;
}

.rb.on {
    background: radial-gradient(circle, #000 2px, #fff 2.500px);
}

.utf {
    height: 20px;
    padding-left: 10px;
}

/* right column */
.side {
    margin-left: 7px;
}

.other-box,
.auto-box {
    width: 310px;
}

.other-box {
    height: 245px;
    margin-bottom: 21px;
}

.other-box > .legend {
    margin: -7px 0 -1px 9px;
    padding-right: 3px;
    letter-spacing: 0.22px;
}

.other-box .row,
.auto-box .row {
    padding-left: 7px;
}

.o1 {
    height: 26px;
}

.o2 {
    height: 17px;
}

.other-box .o3 {
    height: 16px;
    padding-left: 24px;
}

.o3 .inp {
    width: 33px;
    height: 18px;
    margin: 2px 3px 0 0;
}

.o4 {
    height: 30px;
}

.o5 {
    height: 31px;
}

.o6 {
    padding: 1px 0 0 7px;
    height: 14px;
}

.o7 {
    height: 19px;
}

.o7 .imp {
    width: 50px;
    margin-top: -7px;
}

.o7 .inp {
    width: 27px;
    height: 19px;
}

.o7 .dlm {
    width: 119px;
    padding-left: 10px;
}

.o7 .wide {
    width: 48px;
}

.o8 {
    height: 26px;
}

.o8 span:first-child {
    width: 268px;
}

.o8 .inp {
    width: 40px;
}

.o9 {
    height: 44px;
}

.cells {
    display: flex;
}

.cells .inp {
    width: 122px;
    margin: 0 0 -7px 3px;
}

.auto-box {
    height: 85px;
    border-color: #d5d5d5;
}

.auto-box > .legend {
    margin: -12px 0 0 6px;
    padding-right: 8px;
    letter-spacing: 0.15px;
}

.a1 {
    height: 20px;
}

.a2 {
    height: 26px;
}

.by-name {
    width: 138px;
}

.a3 {
    height: 19px;
    font-size: 9.500px;
    line-height: 10px;
}

.dlg-foot {
    flex: none;
    height: 18px;
    border-top: 1px solid #8b9090;
    border-bottom: 2px solid #eceef5;
    background: #b3b8bb;
    box-shadow: inset 0 -1px #777c88;
}

/* window below */
.under {
    display: flex;
    flex: 1;
    padding-left: 9px;
    border-top: 1px solid #666a78;
    border-bottom: 2px solid #8d919b;
    background: #adb1bd;
}

.goods {
    display: flex;
    width: 444px;
    height: 90px;
    border-right: 2px solid #444;
    border-bottom: 2px solid #444;
    background: #fffff4;
}

.side-label {
    width: 28px;
    overflow: hidden;
    background: linear-gradient(90deg, #eefbe0 26px, #fff 26px);
}

.side-label span {
    display: flex;
    width: 26px;
    height: 84px;
    align-items: center;
    writing-mode: vertical-rl;
    transform: rotate(180deg);
    font-size: 11.500px;
    letter-spacing: 0;
    line-height: 22px;
}

.goods-main {
    width: 414px;
}

.grid-wrap {
    height: 67px;
    border: 1px solid #222;
    border-right-width: 2px;
    border-bottom-width: 2px;
    border-top: 0;
    background: #fff;
}

.grid-view {
    display: flex;
    height: 50px;
    overflow: hidden;
}

.grid-view table {
    width: 395px;
    margin-top: -9px;
    border-collapse: collapse;
    table-layout: fixed;
    font-size: 13px;
    letter-spacing: -0.3px;
    line-height: 14px;
}

.grid-view td {
    width: 46px;
    height: 16px;
    padding: 0 2px;
    border-right: 1px solid #c4c4c4;
    border-bottom: 1px solid #c4c4c4;
    overflow: hidden;
}

.grid-view td:nth-child(-n+3) {
    width: 21px;
}

.grid-view td:nth-child(4) {
    width: 36px;
    padding: 0 1px;
}

.grid-view td:nth-child(5) {
    width: 141px;
    padding: 0 1px;
}

.grid-view td.s {
    width: 31px;
    font-size: 11px;
    padding: 0 1px;
}

.grid-view td.y {
    background: #ffffc8;
    text-align: center;
}

.grid-view td:nth-child(9) {
    width: 41px;
}

.grid-view td:nth-child(10) {
    width: 9px;
}

.dim {
    color: #8a8a8a;
}

.scroll-v {
    display: flex;
    align-items: flex-end;
    flex: 1;
    background: repeating-conic-gradient(#d6d3ce 0 25%, #fff 0 50%) 0 0 / 2px 2px;
}

.grid-wrap .scroll-h {
    width: 395px;
    height: 15px;
}

.grid-wrap .thumb {
    width: 52px;
}

.grid-wrap .scroll-h b {
    height: 15px;
}

.category {
    height: 20px;
    margin-top: 1px;
    border: 1px dashed #c9c9c9;
    border-left: 0;
    color: #4545c4;
    font-size: 10px;
    letter-spacing: -0.65px;
    line-height: 20px;
}

.blank {
    width: 478px;
    height: 77px;
    border-right: 1px solid #8d919b;
    border-bottom: 1px solid #8d919b;
    background: #fff;
}

/* status bar */
.statusbar {
    display: flex;
    justify-content: flex-end;
    height: 21px;
    padding-top: 1px;
    border-bottom: 1px solid #fff;
    background: linear-gradient(#e9ebef, #c9ccd3);
    font-size: 11.500px;
    letter-spacing: -0.3px;
    line-height: 20px;
    color: #444;
}

.statusbar span {
    padding-left: 4px;
    border-left: 1px solid #8e929d;
}

.s1 { width: 66px; }
.s2 { width: 55px; }
.s3 { width: 30px; }
.s4 { width: 30px; }
.s5 { width: 37px; }
.s6 { width: 8px; }

/* taskbar */
.taskbar {
    display: flex;
    height: 43px;
    padding: 3px 2px 2px;
    background: #d6d3ce;
}

.start {
    display: flex;
    align-items: center;
    width: 51px;
    height: 38px;
    padding-left: 2px;
    border: 1px solid #fff;
    border-right: 2px solid #555;
    border-bottom: 2px solid #555;
    font-size: 12px;
    font-weight: bold;
    letter-spacing: -0.7px;
}

.task-sep {
    width: 3px;
    height: 34px;
    margin: 1px 8px 0 7px;
    border-left: 1px solid #888;
    border-right: 1px solid #fff;
}

.task {
    display: flex;
    align-items: center;
    justify-content: center;
    width: 47px;
    height: 38px;
    margin-right: 3px;
}

.raised {
    border: 1px solid #fff;
    border-right: 2px solid #555;
    border-bottom: 2px solid #555;
    width: 48px;
}

.pressed {
    border: 1px solid #fff;
    border-top: 2px solid #555;
    border-left: 2px solid #555;
    background: #fff;
}

.tray-left {
    width: 33px;
    height: 34px;
    margin: 1px 2px 0 auto;
    padding: 10px 0 0 8px;
    border-left: 2px solid #999;
    border-right: 1px solid #999;
    font-size: 12px;
}

.tray {
    display: flex;
    align-items: center;
    width: 182px;
    height: 38px;
    padding-left: 5px;
    border: 1px solid #888;
    border-right-color: #fff;
    border-bottom-color: #fff;
}

.flag {
    margin: 0 6px 0 9px;
}

.net {
    margin-right: 7px;
}

.clock {
    width: 68px;
    margin: 0 2px 0 4px;
    text-align: center;
    font-size: 11px;
    line-height: 16px;
}
```
